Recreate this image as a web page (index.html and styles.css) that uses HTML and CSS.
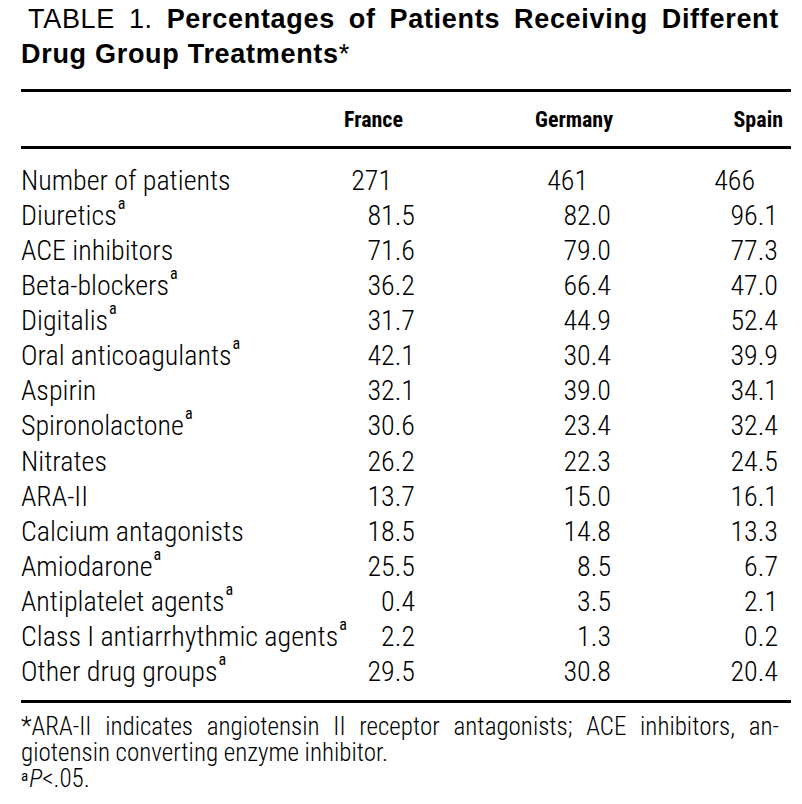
FILE: index.html
```html
<!DOCTYPE html>
<html lang="en">
<head>
<meta charset="utf-8">
<title>Table 1</title>
<link rel="stylesheet" href="styles.css">
</head>
<body>
<div class="page">
  <h1 class="title">
    <span class="title-line first"><span class="label">TABLE 1.</span> Percentages of Patients Receiving Different</span>
    <span class="title-line">Drug Group Treatments<span class="ast">*</span></span>
  </h1>

  <div class="table">
    <div class="row head">
      <div class="cell"></div>
      <div class="cell hd fr">France</div>
      <div class="cell hd de">Germany</div>
      <div class="cell hd es">Spain</div>
    </div>
    <div class="body">
      <div class="row"><div class="cell name">Number of patients</div><div class="cell num count">271</div><div class="cell num count">461</div><div class="cell num count">466</div></div>
      <div class="row"><div class="cell name">Diuretics<sup>a</sup></div><div class="cell num">81.5</div><div class="cell num">82.0</div><div class="cell num">96.1</div></div>
      <div class="row"><div class="cell name">ACE inhibitors</div><div class="cell num">71.6</div><div class="cell num">79.0</div><div class="cell num">77.3</div></div>
      <div class="row"><div class="cell name">Beta-blockers<sup>a</sup></div><div class="cell num">36.2</div><div class="cell num">66.4</div><div class="cell num">47.0</div></div>
      <div class="row"><div class="cell name">Digitalis<sup>a</sup></div><div class="cell num">31.7</div><div class="cell num">44.9</div><div class="cell num">52.4</div></div>
      <div class="row"><div class="cell name">Oral anticoagulants<sup>a</sup></div><div class="cell num">42.1</div><div class="cell num">30.4</div><div class="cell num">39.9</div></div>
      <div class="row"><div class="cell name">Aspirin</div><div class="cell num">32.1</div><div class="cell num">39.0</div><div class="cell num">34.1</div></div>
      <div class="row"><div class="cell name">Spironolactone<sup>a</sup></div><div class="cell num">30.6</div><div class="cell num">23.4</div><div class="cell num">32.4</div></div>
      <div class="row"><div class="cell name">Nitrates</div><div class="cell num">26.2</div><div class="cell num">22.3</div><div class="cell num">24.5</div></div>
      <div class="row"><div class="cell name">ARA-II</div><div class="cell num">13.7</div><div class="cell num">15.0</div><div class="cell num">16.1</div></div>
      <div class="row"><div class="cell name">Calcium antagonists</div><div class="cell num">18.5</div><div class="cell num">14.8</div><div class="cell num">13.3</div></div>
      <div class="row"><div class="cell name">Amiodarone<sup>a</sup></div><div class="cell num">25.5</div><div class="cell num">8.5</div><div class="cell num">6.7</div></div>
      <div class="row"><div class="cell name">Antiplatelet agents<sup>a</sup></div><div class="cell num">0.4</div><div class="cell num">3.5</div><div class="cell num">2.1</div></div>
      <div class="row"><div class="cell name">Class I antiarrhythmic agents<sup>a</sup></div><div class="cell num">2.2</div><div class="cell num">1.3</div><div class="cell num">0.2</div></div>
      <div class="row"><div class="cell name">Other drug groups<sup>a</sup></div><div class="cell num">29.5</div><div class="cell num">30.8</div><div class="cell num">20.4</div></div>
    </div>
  </div>

  <div class="notes">
    <span class="note-line just">*ARA-II indicates angiotensin II receptor antagonists; ACE inhibitors, an-</span>
    <span class="note-line">giotensin converting enzyme inhibitor.</span>
    <span class="note-line"><sup class="fsup">a</sup><i>P</i>&lt;.05.</span>
  </div>
</div>
</body>
</html>
```

FILE: styles.css
```css
html, body {
  margin: 0;
  padding: 0;
  background: #ffffff;
}

body {
  color: #000000;
  font-family: "Roboto Condensed", "Liberation Sans", Arial, sans-serif;
  font-weight: 350;
}

.page {
  width: 770px;
  padding: 2px 0 0 21px;
}

.title {
  margin: 0;
  width: 758px;
  font-family: "Liberation Sans", Arial, sans-serif;
  font-size: 27px;
  line-height: 35px;
  font-weight: 700;
  letter-spacing: 0.7px;
}

.title-line {
  display: block;
}

.title-line.first {
  padding-left: 7px;
  text-align: justify;
  text-align-last: justify;
}

.title .label,
.title .ast {
  font-weight: 400;
}

.table {
  margin-top: 17px;
  border-top: 3px solid #000;
  border-bottom: 3px solid #000;
}

.row {
  display: grid;
  grid-template-columns: minmax(0, 1fr) 85px 196px 167px;
  padding-right: 13px;
}

.head {
  padding-top: 15px;
  padding-bottom: 13px;
  border-bottom: 3px solid #000;
  font-weight: 700;
  font-size: 22px;
  line-height: 26px;
}

.hd {
  text-align: right;
}

.hd.fr { padding-right: 12px; }
.hd.de { margin-right: -2px; }
.hd.es { margin-right: -5px; }

.body {
  padding-top: 14px;
  padding-bottom: 11px;
  font-size: 28px;
  line-height: 35.07px;
}

.cell {
  white-space: nowrap;
}

.num {
  text-align: right;
}

.num.count {
  padding-right: 23px;
}

sup {
  font-size: 16px;
  font-weight: 400;
  line-height: 0;
  vertical-align: 16px;
  margin-left: 1px;
}

.notes {
  width: 758px;
  margin-top: 11px;
  font-size: 25px;
  line-height: 26.2px;
}

.note-line {
  display: block;
}

.note-line.just {
  text-align: justify;
  text-align-last: justify;
}

.fsup {
  font-size: 15px;
  vertical-align: 6px;
  margin-left: 0;
  margin-right: 1px;
}
```
